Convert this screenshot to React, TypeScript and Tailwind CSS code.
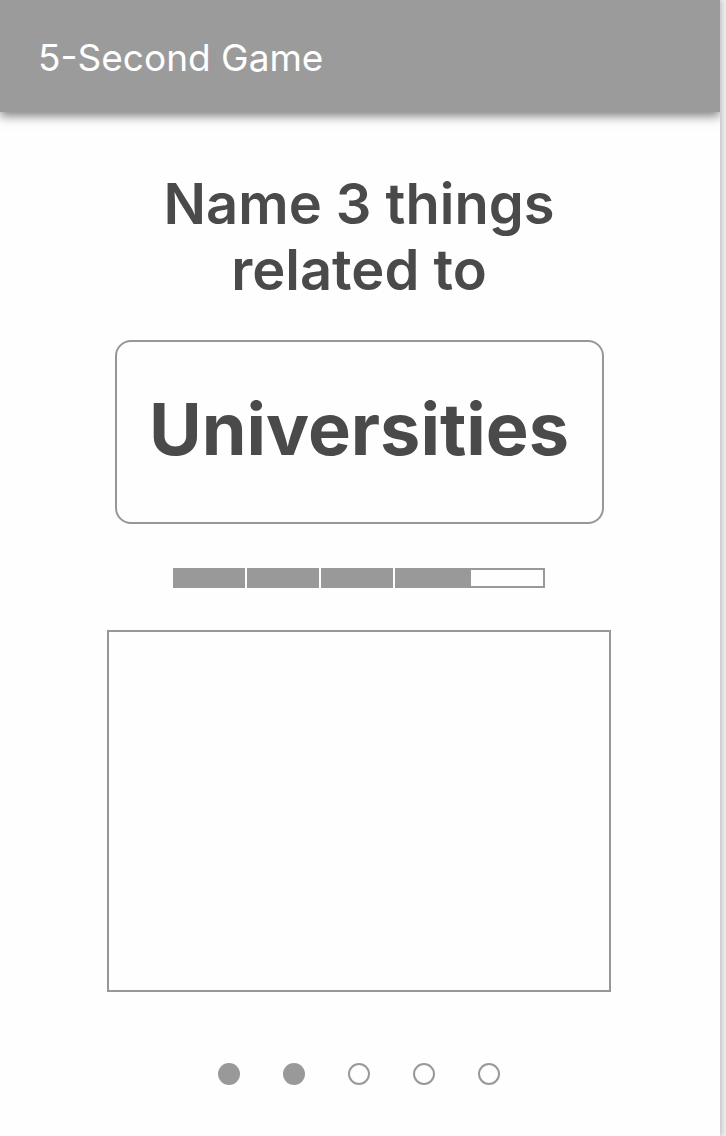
const SEGMENTS = 5;
const SECONDS_PASSED = 4;
const ROUNDS = [true, true, false, false, false];

function segmentClass(index: number) {
  if (index >= SECONDS_PASSED) return "h-5 w-[76px] border-2 border-[#999999]";
  if (index === SECONDS_PASSED - 1) return "h-5 w-[74px] bg-[#999999]";
  return "h-5 w-[74px] border-r-2 border-white bg-[#999999] bg-clip-padding";
}

function Timer() {
  return (
    <div
      role="progressbar"
      aria-label="Seconds passed"
      aria-valuemin={0}
      aria-valuemax={SEGMENTS}
      aria-valuenow={SECONDS_PASSED}
      className="mt-11 flex justify-center"
    >
      {Array.from({ length: SEGMENTS }, (_, i) => (
        <span key={i} className={segmentClass(i)} />
      ))}
    </div>
  );
}

function Rounds() {
  return (
    <ol aria-label="Rounds" className="mt-[71px] flex justify-center gap-[43px]">
      {ROUNDS.map((done, i) => (
        <li
          key={i}
          className={
            done
              ? "size-[22px] rounded-full bg-[#999999]"
              : "size-[22px] rounded-full border-2 border-[#999999]"
          }
        />
      ))}
    </ol>
  );
}

export default function App() {
  return (
    <div className="min-h-screen bg-[#ececec] pr-1.5 font-['Inter',sans-serif] text-[#4a4a4a]">
      <div className="min-h-screen overflow-hidden bg-[#fefefe] shadow-[0_0_6px_rgba(0,0,0,0.3)]">
        <header className="flex h-28 items-center bg-[#9b9b9b] px-[38px] pt-1 shadow-[0_4px_10px_rgba(0,0,0,0.5)]">
          <h1 className="text-[37px] leading-12 font-normal text-white">5-Second Game</h1>
        </header>
        <main className="flex flex-col items-center pt-[59px] pr-0.5 pb-12">
          <h2 className="max-w-[440px] text-center text-[56px] leading-[66px] font-semibold">
            Name 3 things related to
          </h2>
          <div className="mt-[37px] flex w-full max-w-[489px] justify-center rounded-2xl border-2 border-[#979797] pt-[45px] pb-[51px]">
            <p className="text-[72px] leading-[84px] font-bold">Universities</p>
          </div>
          <Timer />
          <textarea
            aria-label="Your answers"
            className="mt-[42px] block h-[362px] w-full max-w-[504px] resize-none border-2 border-[#979797] p-4 text-2xl outline-none"
          />
          <Rounds />
        </main>
      </div>
    </div>
  );
}
